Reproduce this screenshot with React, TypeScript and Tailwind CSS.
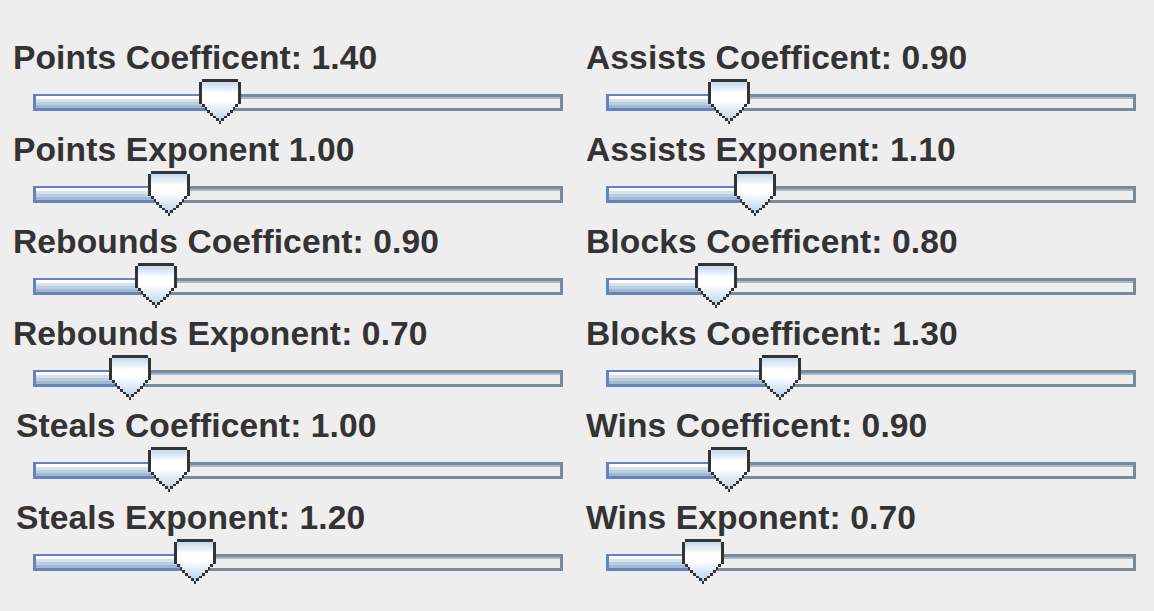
import React from "react";

type S = { label: string; value: number; indent?: boolean };

const left: S[] = [
  { label: "Points Coefficent: 1.40", value: 1.4 },
  { label: "Points Exponent 1.00", value: 1.0 },
  { label: "Rebounds Coefficent: 0.90", value: 0.9 },
  { label: "Rebounds Exponent: 0.70", value: 0.7 },
  { label: "Steals Coefficent: 1.00", value: 1.0, indent: true },
  { label: "Steals Exponent: 1.20", value: 1.2, indent: true },
];

const right: S[] = [
  { label: "Assists Coefficent: 0.90", value: 0.9 },
  { label: "Assists Exponent: 1.10", value: 1.1 },
  { label: "Blocks Coefficent: 0.80", value: 0.8 },
  { label: "Blocks Coefficent: 1.30", value: 1.3 },
  { label: "Wins Coefficent: 0.90", value: 0.9 },
  { label: "Wins Exponent: 0.70", value: 0.7 },
];

const borderPath = (() => {
  let d = "M1 0h13v1h-13z M0 1h1v8h-1z M14 1h1v8h-1z M7 15h1v1h-1z";
  for (let i = 0; i < 6; i++) {
    d += ` M${1 + i} ${9 + i}h1v1h-1z M${13 - i} ${9 + i}h1v1h-1z`;
  }
  return d;
})();

function Thumb({ x, id }: { x: number; id: string }) {
  return (
    <svg
      width="42"
      height="45"
      viewBox="0 0 15 16"
      preserveAspectRatio="none"
      shapeRendering="crispEdges"
      className="absolute top-0"
      style={{ left: x }}
    >
      <defs>
        <linearGradient id={id} x1="0" y1="1" x2="0" y2="15" gradientUnits="userSpaceOnUse">
          <stop offset="0" stopColor="#c4d8ee" />
          <stop offset="0.3" stopColor="#ffffff" />
          <stop offset="0.5" stopColor="#ffffff" />
          <stop offset="0.8" stopColor="#d2e2f3" />
          <stop offset="1" stopColor="#bcd2ea" />
        </linearGradient>
      </defs>
      <path
        d="M1 1H14V9H13V10H12V11H11V12H10V13H9V14H8V15H7V14H6V13H5V12H4V11H3V10H2V9H1Z"
        fill={`url(#${id})`}
      />
      <path d={borderPath} fill="#333333" />
    </svg>
  );
}

function Slider({ s, id }: { s: S; id: string }) {
  const center = 40 + s.value * 128.75;
  return (
    <div className="h-[92px] flex flex-col">
      <div
        className={`h-[41px] leading-[40px] text-[33.6px] font-bold text-[#333333] whitespace-nowrap tracking-[0.1px] ${
          s.indent ? "pl-[16px]" : "pl-[13px]"
        }`}
        style={{ fontFamily: '"Liberation Sans", Arial, sans-serif' }}
      >
        {s.label}
      </div>
      <div className="relative h-[51px]">
        <div className="ml-[33px] mt-[15px] w-[530px] h-[17px] flex">
          <div
            className="h-[17px] border-[#6382bf] border-l-[3px] border-t-[2px] border-b-[3px] bg-[linear-gradient(to_bottom,#ffffff_0px,#ffffff_3px,#d4e2f0_3px,#d4e2f0_6px,#bccee1_6px,#bccee1_9px,#a4b8cc_9px,#a4b8cc_12px)]"
            style={{ width: center - 33 }}
          />
          <div className="flex-1 h-[17px] border-[#7a8a99] border-t-[3px] border-b-[3px] border-r-[3px] bg-[linear-gradient(to_bottom,#a6b9cc_0px,#a6b9cc_2px,#eeeeee_2px)]" />
        </div>
        <Thumb x={center - 21} id={id} />
      </div>
    </div>
  );
}

export default function App() {
  return (
    <div className="w-[1154px] h-[611px] bg-[#eeeeee] overflow-hidden pt-[38px]">
      <div className="grid grid-cols-[573px_573px]">
        <div className="flex flex-col">
          {left.map((s, i) => (
            <Slider key={i} s={s} id={`gl${i}`} />
          ))}
        </div>
        <div className="flex flex-col">
          {right.map((s, i) => (
            <Slider key={i} s={s} id={`gr${i}`} />
          ))}
        </div>
      </div>
    </div>
  );
}
